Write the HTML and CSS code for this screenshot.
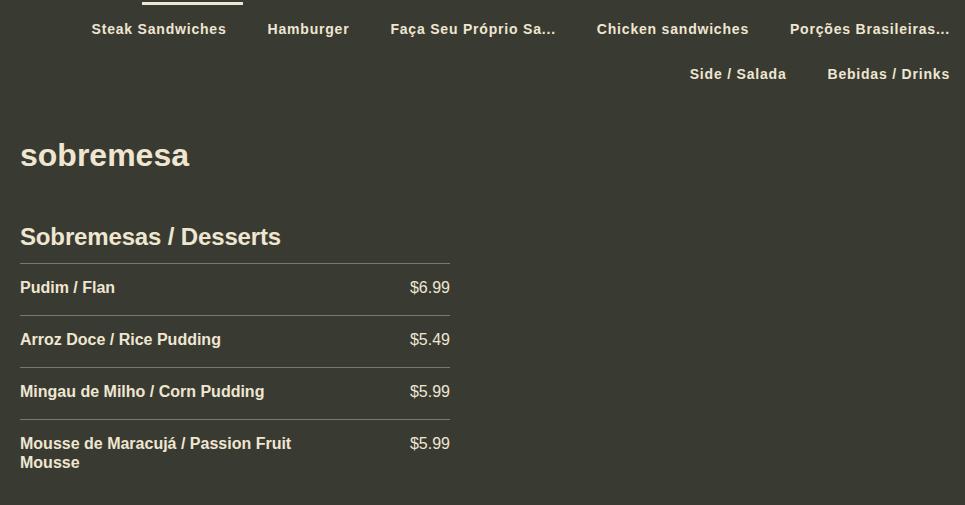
FILE: index.html
```html
<!DOCTYPE html>
<html lang="pt">
<head>
<meta charset="utf-8">
<title>sobremesa</title>
<link rel="stylesheet" href="styles.css">
</head>
<body>
<nav class="nav">
  <a class="nav-item is-active">Steak Sandwiches</a>
  <a class="nav-item">Hamburger</a>
  <a class="nav-item">Faça Seu Próprio Sa...</a>
  <a class="nav-item">Chicken sandwiches</a>
  <a class="nav-item">Porções Brasileiras...</a>
  <a class="nav-item">Side / Salada</a>
  <a class="nav-item">Bebidas / Drinks</a>
</nav>
<main class="menu">
  <h1 class="menu-title">sobremesa</h1>
  <section class="section">
    <h2 class="section-title">Sobremesas / Desserts</h2>
    <ul class="items">
      <li class="item"><span class="item-name">Pudim / Flan</span><span class="item-price">$6.99</span></li>
      <li class="item"><span class="item-name">Arroz Doce / Rice Pudding</span><span class="item-price">$5.49</span></li>
      <li class="item"><span class="item-name">Mingau de Milho / Corn Pudding</span><span class="item-price">$5.99</span></li>
      <li class="item"><span class="item-name">Mousse de Maracujá / Passion Fruit Mousse</span><span class="item-price">$5.99</span></li>
    </ul>
  </section>
</main>
</body>
</html>
```
FILE: styles.css
```css
* { box-sizing: border-box; }
body {
  margin: 0;
  background: #393a31;
  color: #efe6d2;
  font-family: "Liberation Sans", Arial, sans-serif;
}
.nav {
  display: flex;
  flex-wrap: wrap;
  justify-content: flex-end;
  column-gap: 41px;
  padding: 7px 15px 1px 0;
}
.nav-item {
  position: relative;
  font-size: 14px;
  font-weight: 700;
  letter-spacing: 0.8px;
  line-height: 45px;
  color: #efe6d2;
  white-space: nowrap;
}
.nav-item.is-active::before {
  content: "";
  position: absolute;
  left: 50px;
  top: -5px;
  width: 101px;
  height: 3px;
  background: #efe6d2;
}
.menu {
  padding: 0 20px;
}
.menu-title {
  margin: 38px 0 0;
  font-size: 32px;
  line-height: 38px;
  font-weight: 700;
}
.section {
  width: 430px;
}
.section-title {
  margin: 49px 0 12px;
  font-size: 24px;
  line-height: 28px;
  font-weight: 700;
  letter-spacing: -0.15px;
}
.items {
  list-style: none;
  margin: 0;
  padding: 0;
}
.item {
  display: flex;
  justify-content: space-between;
  align-items: flex-start;
  border-top: 1px solid #777a66;
  padding: 14px 0 18px;
  font-size: 16px;
  line-height: 19px;
}
.item-name {
  font-weight: 700;
  max-width: 70%;
}
.item-price {
  font-weight: 400;
}
```
